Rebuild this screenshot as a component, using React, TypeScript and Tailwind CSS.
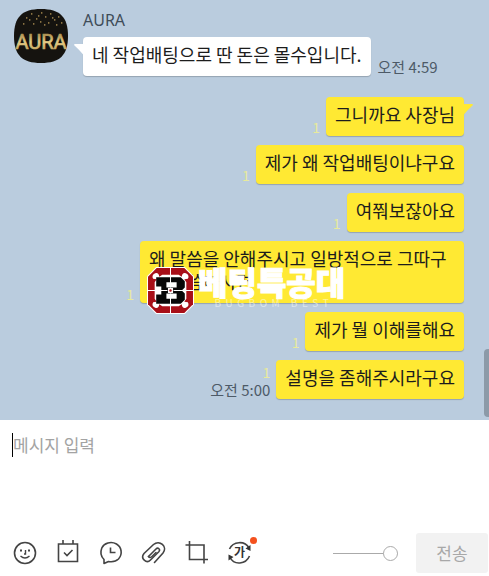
import React from 'react';
import clsx from 'clsx';

interface Message {
  id: number;
  text: string;
  time?: string;
}

const sent: Message[] = [
  { id: 1, text: '그니까요 사장님' },
  { id: 2, text: '제가 왜 작업배팅이냐구요' },
  { id: 3, text: '여쭤보잖아요' },
  { id: 4, text: '왜 말씀을 안해주시고 일방적으로 그따구로 말씀하시면' },
  { id: 5, text: '제가 뭘 이해를해요' },
  { id: 6, text: '설명을 좀해주시라구요', time: '오전 5:00' },
];

const sparks = [
  [12, 8], [17, 4], [22, 9], [27, 3], [31, 7], [36, 4], [40, 10], [44, 7], [9, 14], [19, 14],
  [34, 13], [47, 13], [26, 12], [15, 10], [42, 15], [30, 15], [38, 8], [24, 6],
];

const Avatar = () => (
  <svg viewBox="0 0 54 54" className="h-[54px] w-[54px] shrink-0" role="img" aria-label="AURA">
    <defs>
      <linearGradient id="gold" x1="0" y1="0" x2="0" y2="1">
        <stop offset="0" stopColor="#8f7337" />
        <stop offset="0.5" stopColor="#e6cd86" />
        <stop offset="1" stopColor="#b3924c" />
      </linearGradient>
    </defs>
    <path d="M27 0C46 0 54 8 54 27S46 54 27 54 0 46 0 27 8 0 27 0Z" fill="#15130f" />
    {sparks.map(([x, y]) => (
      <rect key={`${x}-${y}`} x={x} y={y} width="1.4" height="1.8" fill="#8a7342" />
    ))}
    <text
      x="27"
      y="40"
      textAnchor="middle"
      fontSize="20"
      fontFamily="Roboto, sans-serif"
      fill="url(#gold)"
      stroke="url(#gold)"
      strokeWidth="0.7"
    >
      AURA
    </text>
  </svg>
);

const Bubble: React.FC<{ mine?: boolean; tail?: boolean; children: React.ReactNode }> = ({ mine, tail, children }) => (
  <div
    className={clsx(
      'relative max-w-[324px] rounded px-[9px] pt-[6px] pb-[10px] text-[18px] leading-[23px] break-all text-[#1c1c1c] shadow-[0_1px_1px_rgba(0,0,0,0.2)]',
      mine ? 'bg-[#ffe933]' : 'bg-white'
    )}
  >
    {children}
    {tail && (
      <svg
        viewBox="0 0 10 12"
        className={clsx('absolute top-[7px] h-3 w-[10px]', mine ? '-right-[9px]' : '-left-[9px] -scale-x-100')}
        fill={mine ? '#ffe933' : '#fff'}
      >
        <path d="M0 0H9Q10.500 .2 9.500 1.500Q5 5.500 0 11.500Z" />
      </svg>
    )}
  </div>
);

const Watermark = () => (
  <div className="pointer-events-none absolute bottom-[106px] left-[147px] flex items-start gap-1">
    <svg viewBox="0 0 46 46" className="h-[47px] w-[47px] shrink-0">
      <path d="M9 0H37L46 9V37L37 46H9L0 37V9Z" fill="#fff" />
      <path d="M9.500 1H36.500L45 9.500V36.500L36.500 45H9.500L1 36.500V9.500Z" fill="#a80f18" />
      <path
        d="M15 7.500H31L34 9.500Q34.500 5 38 6Q42 8 40 11.500L36.500 12L38.500 15V31L36.500 34L40 34.500Q42 38 38 40Q34.500 41 34 36.500L31 38.500H15L12 36.500Q11.500 41 8 40Q4 38 6 34.500L9.500 34L7.500 31V15L9.500 12L6 11.500Q4 8 8 6Q11.500 5 12 9.500Z"
        fill="#fff"
      />
      <path
        d="M9 10H33L37 14V20L34 23L37 26V32L33 36H9V27H14V19H9ZM19 15V20H29V15ZM19 26V31H29V26Z"
        fill="#080808"
        fillRule="evenodd"
      />
      <path d="M23 0V20M23 26V46M0 23H20M26 23H46" stroke="#fff" strokeWidth="1" />
      <path d="M20.500 20.500H25.500V25.500H20.500Z" fill="#fff" />
      <circle cx="23" cy="23" r="1.200" fill="#a80f18" />
    </svg>
    <div className="flex flex-col items-center text-white">
      <span className="text-[32px] leading-[28px] font-black whitespace-nowrap [-webkit-text-stroke:1px_white]">
        베팅특공대
      </span>
      <span className="text-[10px] leading-[16px] whitespace-pre opacity-50">B  U  G  B  O  M     B  E  S  T</span>
    </div>
  </div>
);

const iconProps = {
  viewBox: '0 0 26 26',
  className: 'h-[26px] w-[26px]',
  fill: 'none',
  stroke: '#444',
  strokeWidth: 1.6,
};

const tools = [
  {
    label: '이모티콘',
    icon: (
      <svg {...iconProps}>
        <circle cx="13" cy="13" r="10.500" />
        <path d="M9 9.500V11.500M17 9.500V11.500" strokeWidth="2" />
        <path d="M13.500 10V14H12M8.500 16Q13 20 17.500 16" strokeWidth="1.400" />
      </svg>
    ),
  },
  {
    label: '일정',
    icon: (
      <svg {...iconProps}>
        <path d="M3.500 4H22.500V21.500H3.500ZM8 0V4M18 0V4" />
        <path d="M9 12.500L12 15.500L17.500 10" />
      </svg>
    ),
  },
  {
    label: '예약 메시지',
    icon: (
      <svg {...iconProps}>
        <path
          d="M6 19.500V23.500L10.500 21.500Q17 22.500 20.500 19C25 14 23.500 7 18.500 4C13 1 6 3 3.800 8C2 12.500 3 16.500 6 19.500Z"
          strokeLinejoin="round"
        />
        <path d="M12.500 7.500V12.500H17.500" />
      </svg>
    ),
  },
  {
    label: '파일 첨부',
    icon: (
      <svg {...iconProps} strokeLinecap="round">
        <path d="M7.500 16.500L15 9C17 7 19.800 9.500 17.800 11.700L9.500 20C5.500 24 -1 18.500 3 13.500L12.500 4.500C18.500 -.5 27 6.500 22 13L13.500 22.500" />
        <path d="M7.500 16.500C8.500 18 10 17.500 11 16.500L15 12.500" />
      </svg>
    ),
  },
  {
    label: '캡처',
    icon: (
      <svg {...iconProps}>
        <path d="M5.500 1V19.500H24M1.500 5H20V23.500" />
      </svg>
    ),
  },
  {
    label: '번역',
    icon: (
      <svg {...iconProps}>
        <path d="M2.500 9C6 1 18 .5 22 8M22.500 16C19 24.500 7 25.500 3 17.500" />
        <path d="M23.500 5V11L18.500 8.500ZM1.500 20.500V14.500L6.500 17Z" fill="#333" stroke="none" />
        <text x="12.500" y="17" textAnchor="middle" fontSize="12" fontWeight="700" fill="#333" stroke="none">
          가
        </text>
      </svg>
    ),
    dot: true,
  },
];

const Unread = () => <span className="text-[14px] leading-[18px] text-[#e8ea9c]">1</span>;

const App: React.FC = () => {
  return (
    <div className="flex min-h-screen flex-col bg-white font-['Noto_Sans_CJK_KR',sans-serif]">
      <main className="relative bg-[#baccde] pt-[9px] pb-[21px]">
        <div className="flex items-start gap-[15px] pl-[14px]">
          <Avatar />
          <div>
            <p className="font-['Noto_Sans',sans-serif] text-[16px] leading-[22px] text-[#3f4c59]">AURA</p>
            <div className="mt-[6px] flex items-end gap-[7px]">
              <Bubble tail>네 작업배팅으로 딴 돈은 몰수입니다.</Bubble>
              <time className="text-[15px] leading-[18px] whitespace-nowrap text-[#4d5a67]">오전 4:59</time>
            </div>
          </div>
        </div>

        <div className="mt-[21px] flex flex-col gap-[9px] pr-[25px] pl-4">
          {sent.map((message, index) => (
            <div key={message.id} className="flex items-end justify-end gap-[6px]">
              <div className="flex flex-col items-end">
                <Unread />
                {message.time && (
                  <time className="text-[15px] leading-[18px] whitespace-nowrap text-[#4d5a67]">{message.time}</time>
                )}
              </div>
              <Bubble mine tail={index === 0}>
                {message.text}
              </Bubble>
            </div>
          ))}
        </div>

        <Watermark />
        <div className="absolute right-0 bottom-[3px] h-[68px] w-[5px] rounded-l bg-[#8c9aa8]" />
      </main>

      <footer className="flex flex-1 flex-col justify-between">
        <div className="flex items-start pt-[13px] pl-3">
          <span className="h-6 w-px bg-black" />
          <textarea
            rows={2}
            aria-label="메시지 입력"
            placeholder="메시지 입력"
            className="min-w-0 flex-1 resize-none text-[17px] leading-[23px] outline-none placeholder:text-[#a3a3a3]"
          />
        </div>

        <div className="flex items-center justify-between pb-[3px] pl-3">
          <div className="flex items-center gap-[17px]">
            {tools.map((tool) => (
              <button key={tool.label} type="button" aria-label={tool.label} className="relative">
                {tool.icon}
                {tool.dot && (
                  <span className="absolute -top-[3px] -right-1 h-[7px] w-[7px] rounded-full bg-[#f4511e]" />
                )}
              </button>
            ))}
          </div>
          <div className="flex items-center gap-[18px] pr-px">
            <input
              type="range"
              aria-label="창 투명도"
              defaultValue={100}
              className="h-4 w-[65px] appearance-none bg-transparent [&::-webkit-slider-runnable-track]:h-px [&::-webkit-slider-runnable-track]:bg-[#aaa] [&::-webkit-slider-thumb]:-mt-[7px] [&::-webkit-slider-thumb]:h-[15px] [&::-webkit-slider-thumb]:w-[15px] [&::-webkit-slider-thumb]:appearance-none [&::-webkit-slider-thumb]:rounded-full [&::-webkit-slider-thumb]:border [&::-webkit-slider-thumb]:border-[#aaa] [&::-webkit-slider-thumb]:bg-white"
            />
            <button type="button" className="h-10 w-[72px] rounded-[3px] bg-[#f2f2f2] text-[17px] text-[#a8a8a8]">
              전송
            </button>
          </div>
        </div>
      </footer>
    </div>
  );
};

export default App;
